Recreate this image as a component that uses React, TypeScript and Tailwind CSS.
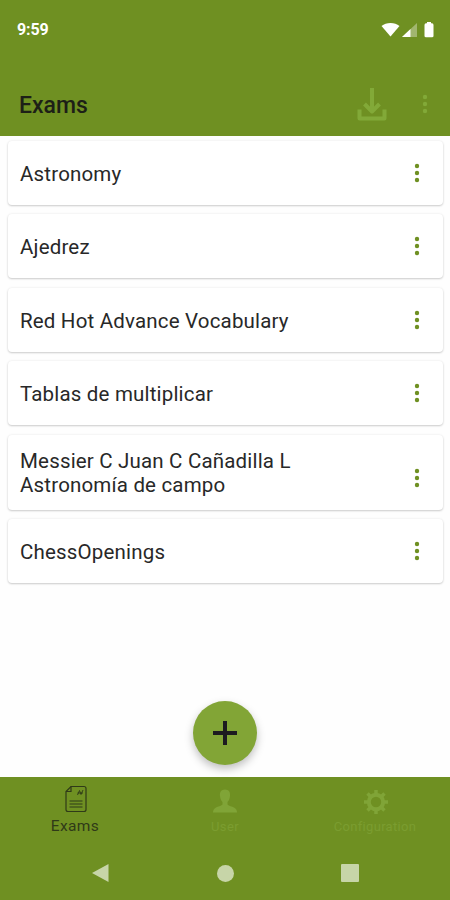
interface DotsProps {
  className: string;
}

interface ExamCardProps {
  title: string;
  className: string;
}

const exams = [
  { title: "Astronomy", height: "h-[64px]" },
  { title: "Ajedrez", height: "h-[64px]" },
  { title: "Red Hot Advance Vocabulary", height: "h-[64px]" },
  { title: "Tablas de multiplicar", height: "h-[64px]" },
  {
    title: "Messier C Juan C Cañadilla L\nAstronomía de campo",
    height: "h-[75px]",
  },
  { title: "ChessOpenings", height: "h-[64px]" },
];

function Dots({ className }: DotsProps) {
  return (
    <svg className={className} viewBox="0 0 6 20" fill="currentColor">
      <circle cx="3" cy="3" r="2.2" />
      <circle cx="3" cy="10" r="2.2" />
      <circle cx="3" cy="17" r="2.2" />
    </svg>
  );
}

function StatusBar() {
  return (
    <div className="flex h-[60px] items-center justify-between pl-[17px] pr-[16px] text-white">
      <span className="text-base font-bold tracking-[-0.1px]">9:59</span>
      <div className="flex items-center">
        <svg className="mr-[2px] h-4 w-[19px]" viewBox="0 0 19 16" fill="currentColor">
          <path d="M9.5 14.500 0.5 4C3 2 6 1 9.500 1s6.500 1 9 3z" />
        </svg>
        <svg className="mr-[7px] h-4 w-[15px]" viewBox="0 0 15 16" fill="currentColor">
          <path d="M15 1v14H0z" opacity="0.35" />
          <path d="M8.500 7v8H0z" />
        </svg>
        <svg className="h-4 w-[10px]" viewBox="0 0 10 16" fill="currentColor">
          <path d="M3 0h4v1.200h1Q9.500 1.500 9.500 3v11Q9.500 15.300 8 15.300H2Q.5 15.300.5 14V3Q.5 1.500 2 1.200h1z" />
        </svg>
      </div>
    </div>
  );
}

function Toolbar() {
  return (
    <div className="flex h-[76px] items-center pl-[19px] pr-[22px] pt-[12px]">
      <h1 className="flex-1 pt-[3px] text-[23px] font-medium leading-7 text-[#1d1f17]">
        Exams
      </h1>
      <button className="mr-[35px] text-[#82a938]">
        <svg
          className="h-[34px] w-[30px]"
          viewBox="0 0 30 34"
          fill="none"
          stroke="currentColor"
          strokeWidth="4"
          strokeLinejoin="round"
        >
          <path d="M15 1v23M7.500 17l7.500 7.500 7.500-7.500M2.500 22.500V31.500h25v-9" />
        </svg>
      </button>
      <button className="text-[#82a938]">
        <Dots className="h-5 w-[6px]" />
      </button>
    </div>
  );
}

function ExamCard({ title, className }: ExamCardProps) {
  const multiline = title.includes("\n");

  return (
    <div
      className={`flex items-center justify-between rounded-[4px] bg-white pl-[12px] pr-[23px] shadow-[0_1px_2px_rgba(0,0,0,0.18),0_0_3px_rgba(0,0,0,0.07)] ${className}`}
    >
      <span className="whitespace-pre-line pt-[2px] text-[20.500px] leading-6 tracking-[0.18px] text-[#282828]">
        {title}
      </span>
      <button className={`text-[#6f9022] ${multiline ? "pt-[11px]" : ""}`}>
        <Dots className="h-5 w-[6px]" />
      </button>
    </div>
  );
}

function BottomNav() {
  return (
    <nav className="grid h-[69px] grid-cols-3 pt-2 text-[#80a437]">
      <button className="flex flex-col items-center text-[#2f3a18]">
        <svg className="ml-px h-7 w-[22px]" viewBox="0 0 22 28" fill="none" stroke="currentColor" strokeWidth="1.200">
          <path d="M6 1.500h13Q21 1.500 21 3.500v21q0 2-2 2H3q-2 0-2-2V6.500z" />
          <path d="M1 6.500h5v-5" />
          <path d="M4.500 16h13M4.500 19h13M4.500 22h13" />
          <path d="m12.500 10 2-4.500 1.500 4 2-4.500M12.500 8h5.500" strokeWidth="0.900" />
        </svg>
        <span className="mt-[3px] text-[15.500px] leading-5 tracking-[0.35px]">Exams</span>
      </button>
      <button className="flex flex-col items-center">
        <svg className="mt-1 h-6 w-[26px]" viewBox="0 0 26 24" fill="currentColor">
          <path d="M13 0.500c3.700 0 5.500 2.800 5 6.500-.3 3-1.300 5-2.500 6v2.500c1.500 1.500 4.500 2 6.500 3q3 1.500 3 5H1q0-3.500 3-5c2-1 5-1.500 6.500-3V13c-1.200-1-2.200-3-2.500-6-.5-3.700 1.300-6.500 5-6.500z" />
        </svg>
        <span className="mt-[4px] text-[13px] leading-5 tracking-[0.4px] text-[#7b9d30]">User</span>
      </button>
      <button className="flex flex-col items-center">
        <svg className="ml-px mt-1 h-[26px] w-[26px]" viewBox="0 0 26 26" fill="none" stroke="currentColor">
          <circle cx="13" cy="13" r="7.200" strokeWidth="4" />
          <path
            d="M13 1v4M13 21v4M1 13h4M21 13h4M4.500 4.500l3 3M18.500 18.500l3 3M4.500 21.500l3-3M18.500 7.500l3-3"
            strokeWidth="3.500"
          />
        </svg>
        <span className="mt-[2px] text-[13px] leading-5 tracking-[0.3px] text-[#7b9d30]">Configuration</span>
      </button>
    </nav>
  );
}

function SystemNav() {
  return (
    <div className="flex h-[54px] items-center justify-between px-[91px] text-[#c7d5a8]">
      <svg className="h-5 w-[18px]" viewBox="0 0 18 20" fill="currentColor">
        <path d="M17.500 1v18L1 10z" />
      </svg>
      <div className="h-[17px] w-[17px] rounded-full bg-current" />
      <div className="h-[18px] w-[18px] rounded-[1px] bg-current" />
    </div>
  );
}

export default function App() {
  return (
    <div className="flex h-[900px] w-[450px] flex-col overflow-hidden bg-white font-['Roboto',sans-serif]">
      <header className="bg-[#6f9022]">
        <StatusBar />
        <Toolbar />
      </header>

      <main className="flex flex-1 flex-col bg-[#fefefe]">
        <div className="flex flex-col gap-[9.400px] pl-2 pr-[7px] pt-[5px]">
          {exams.map((exam) => (
            <ExamCard key={exam.title} title={exam.title} className={exam.height} />
          ))}
        </div>
        <button className="mx-auto mb-3 mt-auto flex h-16 w-16 items-center justify-center rounded-full bg-[#82a536] shadow-[0_4px_8px_rgba(0,0,0,0.25)]">
          <svg className="h-[26px] w-[26px]" viewBox="0 0 26 26" stroke="#1d1b20" strokeWidth="4">
            <path d="M13 1v24M1 13h24" />
          </svg>
        </button>
      </main>

      <footer className="bg-[#6f9022]">
        <BottomNav />
        <SystemNav />
      </footer>
    </div>
  );
}
